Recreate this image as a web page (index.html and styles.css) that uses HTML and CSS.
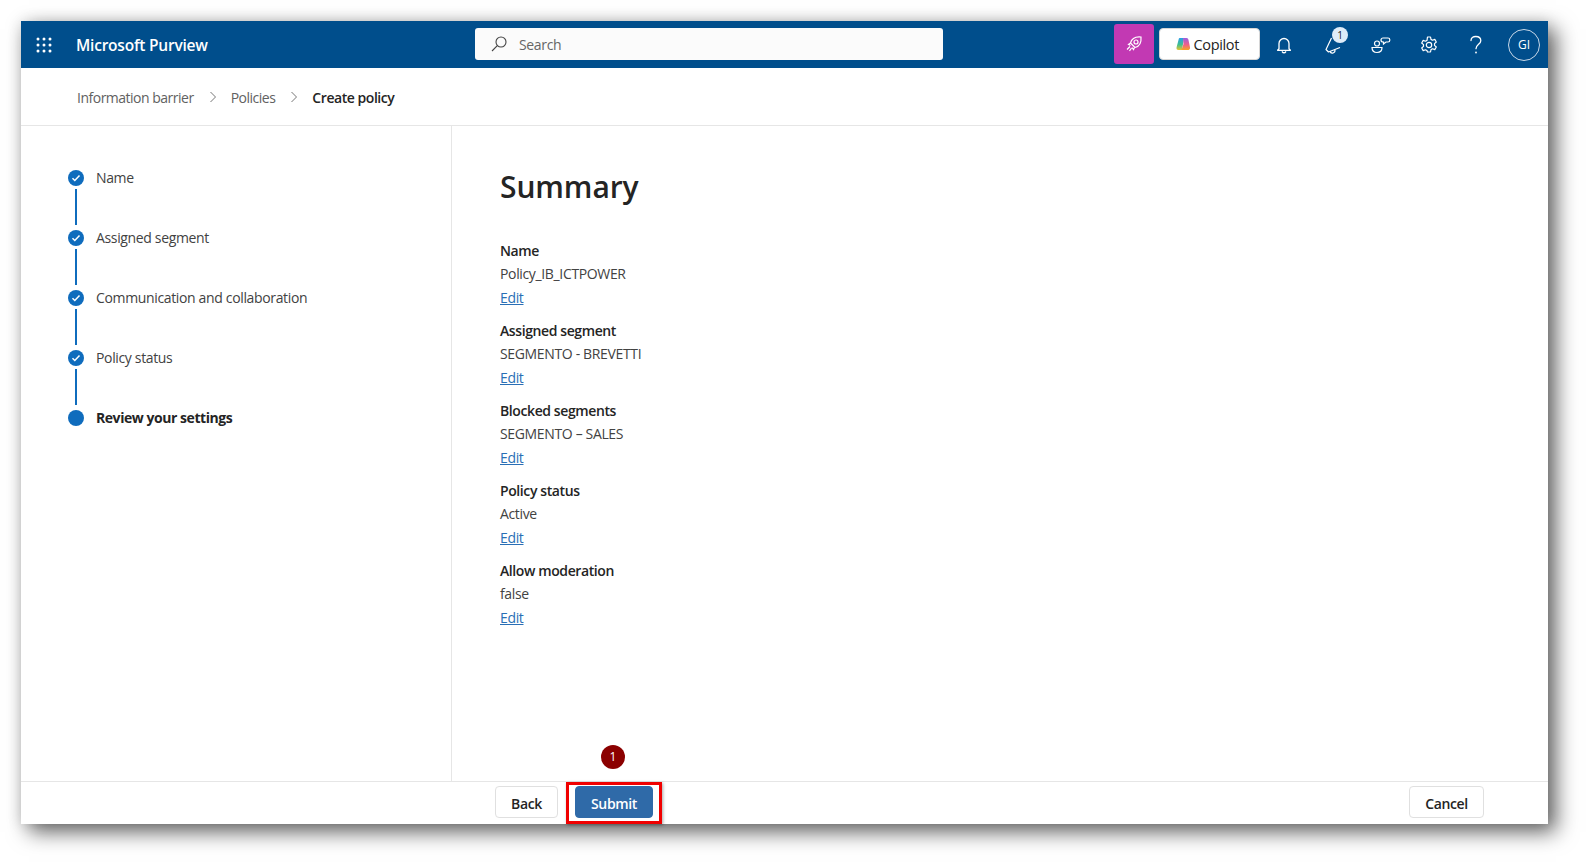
FILE: index.html
```html
<!DOCTYPE html>
<html lang="en">
<head>
<meta charset="utf-8">
<title>Microsoft Purview - Create policy</title>
<link rel="stylesheet" href="styles.css">
</head>
<body>
<div class="window">
  <header class="topbar">
    <div class="brand">
      <svg class="waffle" width="16" height="16" viewBox="0 0 16 16" fill="#fff"><circle cx="2" cy="2" r="1.500"/><circle cx="8" cy="2" r="1.500"/><circle cx="14" cy="2" r="1.500"/><circle cx="2" cy="8" r="1.500"/><circle cx="8" cy="8" r="1.500"/><circle cx="14" cy="8" r="1.500"/><circle cx="2" cy="14" r="1.500"/><circle cx="8" cy="14" r="1.500"/><circle cx="14" cy="14" r="1.500"/></svg>
      <span class="brand-name">Microsoft Purview</span>
    </div>
    <div class="search">
      <svg width="18" height="18" viewBox="0 0 18 18" fill="none" stroke="#444" stroke-width="1.100"><circle cx="11" cy="7" r="5"/><path d="M7.300 10.600 2 16"/></svg>
      <span>Search</span>
    </div>
    <div class="tools">
      <div class="rocket">
        <svg width="18" height="18" viewBox="0 0 18 18" fill="none" stroke="#fff" stroke-width="1.200"><path d="M5.500 8C6.500 4 10.500 1.500 16 2c.5 5.500-2 9.500-6 10.500Z"/><circle cx="11" cy="7" r="2"/><path d="M5.500 8 3.500 9.500l2 1M9.500 12.500 8.500 14.500l-1.500-2M5 11.500 2 14.500M6.500 13 4.500 16"/></svg>
      </div>
      <div class="copilot">
        <svg width="14" height="14" viewBox="0 0 14 14">
          <defs>
            <linearGradient id="cpL" x1="0" y1="0" x2="0" y2="1"><stop offset="0" stop-color="#2a9de8"/><stop offset=".55" stop-color="#3fbf8f"/><stop offset="1" stop-color="#e8c52e"/></linearGradient>
            <linearGradient id="cpR" x1="0" y1="0" x2="0" y2="1"><stop offset="0" stop-color="#9a5fe0"/><stop offset=".55" stop-color="#ee5f8a"/><stop offset="1" stop-color="#f6a623"/></linearGradient>
          </defs>
          <path d="M3.500 1h4.500L6 13H2.500C.8 13 .2 11.700.6 10.300L2.500 3C2.800 1.700 3 1 3.500 1Z" fill="url(#cpL)"/>
          <path d="M7 1h3.500c1.200 0 1.800.8 2 2L14 10.300C14.300 11.800 13.500 13 12 13H5.500L7.500 7Z" fill="url(#cpR)"/>
        </svg>
        <span>Copilot</span>
      </div>
      <div class="tool tool-bell">
        <svg width="18" height="18" viewBox="0 0 18 18" fill="none" stroke="#fff" stroke-width="1.300"><path d="M4 12.800V7.500a5 5 0 0 1 10 0v5.300l1.400 1.500H2.600Z" stroke-linejoin="round"/><path d="M7.300 15.800a2 2 0 0 0 3.400 0" stroke-linecap="round"/></svg>
      </div>
      <div class="tool tool-badge">
        <svg width="20" height="20" viewBox="0 0 20 20" fill="none" stroke="#fff" stroke-width="1.200" stroke-linejoin="round"><path d="M7.500 3 2 14.500l2.500 2.500L16 12.500"/><path d="M6 16.300a2.500 2.500 0 0 0 4.800-1.500"/></svg>
        <span class="count">1</span>
      </div>
      <div class="tool">
        <svg width="20" height="18" viewBox="0 0 20 18" fill="none" stroke="#fff" stroke-width="1.200"><circle cx="6" cy="7.500" r="2.500"/><path d="M1 11.500h10c0 3-2 5-5 5s-5-2-5-5Z"/><path d="M12 2h5a1.800 1.800 0 0 1 1.800 1.800v.4A1.800 1.800 0 0 1 17 6h-2l-2.500 2V6h-.5a2 2 0 0 1 0-4Z"/></svg>
      </div>
      <div class="tool">
        <svg width="18" height="18" viewBox="0 0 18 18" fill="none" stroke="#fff" stroke-width="1.200" stroke-linejoin="round"><circle cx="9" cy="9" r="2.700"/><path d="M7.500 1h3l.5 2.400 1.500.8 2.300-.8 1.500 2.600-1.800 1.600v1.800l1.800 1.600-1.500 2.600-2.300-.8-1.500.8-.5 2.400h-3L7 14.600l-1.500-.8-2.300.8-1.500-2.600 1.800-1.600V8.600L1.700 7l1.500-2.600 2.300.8L7 4.400Z"/></svg>
      </div>
      <div class="tool">
        <svg width="14" height="20" viewBox="0 0 14 20" fill="none" stroke="#fff" stroke-width="1.300"><path d="M2 5.500C2 3 4 1.500 6.800 1.500c3 0 5 1.800 5 4.200 0 3.500-4.800 3.800-4.800 8" stroke-linecap="round"/><circle cx="7" cy="17.500" r=".9" fill="#fff" stroke="none"/></svg>
      </div>
      <div class="avatar">GI</div>
    </div>
  </header>

  <nav class="crumbs">
    <span class="crumb">Information barrier</span>
    <svg class="sep" width="8" height="12" viewBox="0 0 8 12" fill="none" stroke="#777" stroke-width="1"><path d="m1.500 1 5 5-5 5"/></svg>
    <span class="crumb">Policies</span>
    <svg class="sep" width="8" height="12" viewBox="0 0 8 12" fill="none" stroke="#777" stroke-width="1"><path d="m1.500 1 5 5-5 5"/></svg>
    <span class="crumb current">Create policy</span>
  </nav>

  <div class="body">
    <aside class="steps">
      <div class="step done"><span class="dot"><svg width="10" height="10" viewBox="0 0 10 10" fill="none" stroke="#fff" stroke-width="1.500"><path d="m1.500 5.300 2.300 2.200 4.700-5"/></svg></span><span class="step-label">Name</span></div>
      <div class="step done"><span class="dot"><svg width="10" height="10" viewBox="0 0 10 10" fill="none" stroke="#fff" stroke-width="1.500"><path d="m1.500 5.300 2.300 2.200 4.700-5"/></svg></span><span class="step-label">Assigned segment</span></div>
      <div class="step done"><span class="dot"><svg width="10" height="10" viewBox="0 0 10 10" fill="none" stroke="#fff" stroke-width="1.500"><path d="m1.500 5.300 2.300 2.200 4.700-5"/></svg></span><span class="step-label">Communication and collaboration</span></div>
      <div class="step done"><span class="dot"><svg width="10" height="10" viewBox="0 0 10 10" fill="none" stroke="#fff" stroke-width="1.500"><path d="m1.500 5.300 2.300 2.200 4.700-5"/></svg></span><span class="step-label">Policy status</span></div>
      <div class="step active"><span class="dot"></span><span class="step-label">Review your settings</span></div>
    </aside>
    <main class="summary">
      <h1>Summary</h1>
      <section class="group"><h2>Name</h2><p>Policy_IB_ICTPOWER</p><a href="#">Edit</a></section>
      <section class="group"><h2>Assigned segment</h2><p>SEGMENTO - BREVETTI</p><a href="#">Edit</a></section>
      <section class="group"><h2>Blocked segments</h2><p>SEGMENTO – SALES</p><a href="#">Edit</a></section>
      <section class="group"><h2>Policy status</h2><p>Active</p><a href="#">Edit</a></section>
      <section class="group"><h2>Allow moderation</h2><p>false</p><a href="#">Edit</a></section>
    </main>
  </div>

  <footer class="actions">
    <button class="btn back">Back</button>
    <div class="highlight">
      <span class="marker">1</span>
      <button class="btn submit">Submit</button>
    </div>
    <button class="btn cancel">Cancel</button>
  </footer>
</div>
</body>
</html>
```
FILE: styles.css
```css
* { box-sizing: border-box; }
html, body { margin: 0; height: 100%; background: #fff; }
body {
  padding: 21px 0 0 21px;
  overflow: hidden;
  font-family: "Open Sans", "Liberation Sans", sans-serif;
  font-size: 14px;
  letter-spacing: -0.35px;
  color: #242424;
}
.window {
  width: 1527px;
  height: 803px;
  display: flex;
  flex-direction: column;
  background: #fff;
  box-shadow: 8px 8px 20px rgba(0,0,0,.6), 0 0 14px rgba(0,0,0,.12);
}
.topbar {
  height: 47px;
  flex: none;
  display: flex;
  align-items: center;
  background: #004e8c;
  color: #fff;
}
.brand { width: 454px; display: flex; align-items: center; padding-left: 15px; flex: none; }
.brand-name { margin-left: 24px; font-size: 15.5px; font-weight: 600; letter-spacing: -0.22px; }
.search {
  width: 468px;
  height: 32px;
  margin-bottom: 1px;
  flex: none;
  display: flex;
  align-items: center;
  gap: 11px;
  padding-left: 15px;
  background: #fbfbfb;
  border-radius: 3px;
  color: #666;
}
.tools { margin-left: auto; display: flex; align-items: center; padding-right: 8px; }
.rocket {
  width: 40px;
  height: 40px;
  margin-bottom: 1px;
  display: flex;
  align-items: center;
  justify-content: center;
  background: #c239b3;
  border-radius: 3px;
}
.copilot {
  width: 101px;
  height: 32px;
  margin-bottom: 1px;
  margin-left: 5px;
  margin-right: 1px;
  display: flex;
  align-items: center;
  gap: 4px;
  padding-left: 16px;
  background: #fff;
  border: 1px solid #d6d6d6;
  border-radius: 4px;
  color: #242424;
  font-size: 14.5px;
  font-weight: 500;
}
.tool {
  width: 47.500px;
  height: 47px;
  display: flex;
  align-items: center;
  justify-content: center;
  position: relative;
}
.tool-bell { margin-right: 2px; }
.count {
  position: absolute;
  top: 6px;
  left: 22px;
  width: 16px;
  height: 16px;
  border-radius: 50%;
  background: #deecf9;
  color: #242424;
  font-size: 10px;
  line-height: 16px;
  text-align: center;
  letter-spacing: 0;
}
.avatar {
  width: 32px;
  height: 32px;
  margin-left: 8px;
  border: 1px solid #c8d8e8;
  border-radius: 50%;
  display: flex;
  align-items: center;
  justify-content: center;
  font-size: 12px;
  letter-spacing: 0;
}
.crumbs {
  height: 58px;
  flex: none;
  display: flex;
  align-items: center;
  padding-left: 56px;
  padding-top: 1px;
  border-bottom: 1px solid #e6e6e6;
}
.crumb { color: #616161; letter-spacing: -0.5px; }
.crumb.current { color: #242424; font-weight: 600; letter-spacing: -0.45px; }
.sep { margin: 0 14px 0 15px; }
.body { flex: 1; display: flex; min-height: 0; }
.steps {
  width: 431px;
  flex: none;
  border-right: 1px solid #e6e6e6;
  padding: 43px 0 0 47px;
}
.step {
  height: 60px;
  display: flex;
  align-items: flex-start;
  gap: 12px;
  position: relative;
  color: #424242;
}
.step-label { line-height: 18px; }
.dot {
  width: 16px;
  height: 16px;
  margin-top: 1px;
  flex: none;
  display: flex;
  align-items: center;
  justify-content: center;
  border-radius: 50%;
  background: #0f6cbd;
}
.step.done::after {
  content: "";
  position: absolute;
  left: 7px;
  top: 20px;
  width: 2px;
  height: 36px;
  background: #0f6cbd;
}
.step.active { color: #242424; font-weight: 700; letter-spacing: -0.45px; }
.summary { flex: 1; padding: 38px 0 0 48px; }
h1 { margin: 0 0 29px; font-size: 30px; line-height: 46px; font-weight: 600; letter-spacing: -0.1px; color: #242424; }
.group { height: 80px; }
h2 { margin: 0; font-size: 14px; line-height: 23px; font-weight: 600; color: #242424; letter-spacing: -0.4px; }
.group p { margin: 0; line-height: 24px; color: #424242; letter-spacing: -0.35px; }
.group a { display: block; line-height: 24px; color: #2a6fb5; text-decoration: underline; width: fit-content; }
.actions {
  height: 43px;
  flex: none;
  display: flex;
  align-items: flex-start;
  padding-left: 474px;
  padding-right: 64px;
  border-top: 1px solid #e6e6e6;
}
.btn {
  height: 32px;
  margin-top: 4px;
  padding-top: 4px;
  font-family: inherit;
  font-size: 14px;
  font-weight: 600;
  letter-spacing: -0.36px;
  border-radius: 4px;
  border: 1px solid #e0e0e0;
  background: #fff;
  color: #242424;
}
.back { width: 63px; }
.highlight {
  position: relative;
  width: 96px;
  height: 42px;
  margin-left: 8px;
  border: 3px solid #f00000;
  padding-left: 6px;
  box-shadow: 1px 1px 3px rgba(0,0,0,.35);
}
.highlight .btn { margin-top: 1px; }
.marker {
  position: absolute;
  left: 32px;
  top: -40px;
  width: 24px;
  height: 24px;
  border-radius: 50%;
  background: #8b0000;
  color: #fff;
  font-size: 12px;
  line-height: 24px;
  text-align: center;
  letter-spacing: 0;
}
.submit { width: 78px; background: #2f6aa8; border-color: #2f6aa8; color: #fff; }
.cancel { width: 75px; margin-left: auto; }
```
